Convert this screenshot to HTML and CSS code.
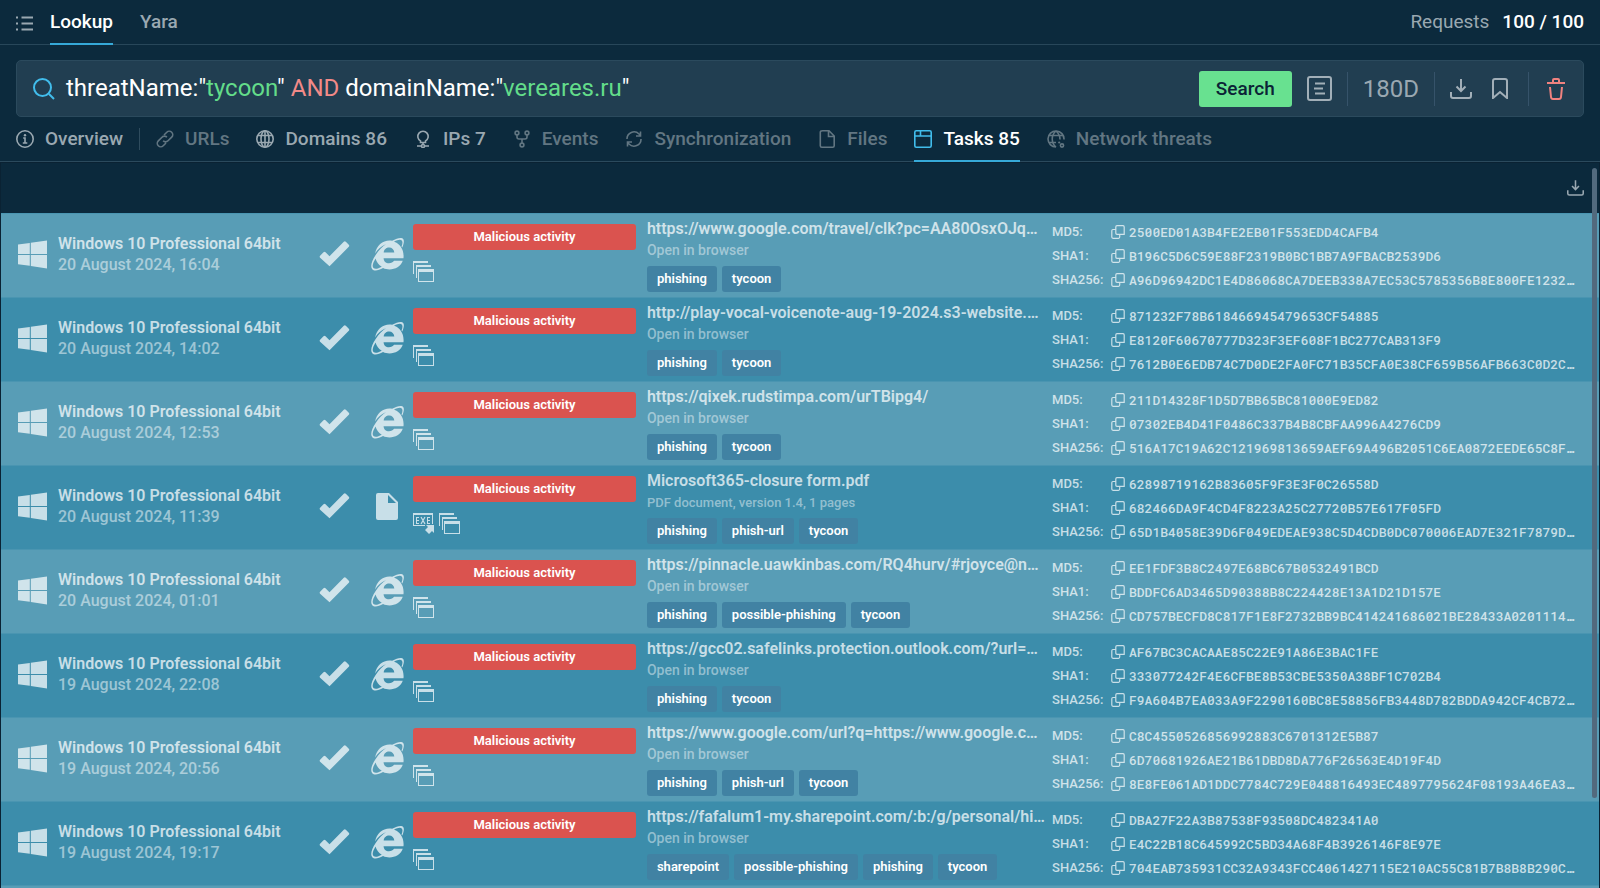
FILE: index.html
```html
<!DOCTYPE html>
<html lang="en">
<head>
<meta charset="utf-8">
<meta name="viewport" content="width=device-width, initial-scale=1">
<title>Threat lookup</title>
<link rel="stylesheet" href="styles.css">
</head>
<body>
<svg class="sprite" aria-hidden="true">
  <symbol id="win" viewBox="0 0 29 29"><path d="M0 4.600 11.800 3v11H0zM12.800 2.800 29 .4V14H12.800zM0 15h11.800v10.800L0 24.200zM12.800 15H29v13.600l-16.200-2.500z"/></symbol>
  <symbol id="check" viewBox="0 0 30 26"><path d="M.6 14.700 4 11.200q1-.8 2 0l4 4L24.300.8q1-.9 2 0l3 3q.9 1 0 2L10 25.300.6 16.700q-.9-1 0-2z"/></symbol>
  <symbol id="ie" viewBox="0 0 32 32"><path fill-rule="evenodd" d="M31.500 20H12.200c.1 3 2.200 4.900 5.200 4.900 2.200 0 4-.8 4.900-2.300h8.500C28.900 28 23.600 31 17.900 31c-2.200 0-4.300-.4-6.200-1.400C7.200 32.200 3 32.800 1.200 30.800-1 28.300.6 22.700 4.500 16.900 7.500 12.500 11.400 8.700 14.600 6.400 9.600 8.600 6 12.300 4 15.500 5.200 8.200 11.200 3 18 3c.9 0 1.600 0 2.500.2C25 .9 29.600-.6 31.200 1.500c1.300 1.700.6 5-.9 8.200l-.7-.9c1-2.600 1.300-5 .2-6-1.200-1.200-4.100-.6-7.500 1.200C28.500 6 32.300 12 31.500 20zM12.300 14.600h10.300c-.2-2.800-2.200-4.800-5-4.800s-5.100 2-5.300 4.800zM4.400 20.300c-2.500 4.200-3.600 7.700-2 9.200 1.400 1.400 4.500.8 8-1.200-2.900-1.800-5.100-4.600-6-8z"/></symbol>
  <symbol id="doc" viewBox="0 0 22 27"><path fill-rule="evenodd" d="M2 0h11l9 9v16q0 2-2 2H2q-2 0-2-2V2q0-2 2-2zm10 2v8h8z"/></symbol>
  <symbol id="stack" viewBox="0 0 21 21"><path d="M0 0h15v2H1v11H0zM3 4h15v2H4v11H3z"/><path fill-rule="evenodd" d="M5 8h16v13H5zm1 3v9h14v-9z"/></symbol>
  <symbol id="exe" viewBox="0 0 21 21"><path fill-rule="evenodd" d="M0 0h20v11h-1V2H1v10h11v1H0z"/><path d="M3 4h3v1H4v2h2v1H4v2h2v1H3zM14 4h3v1h-2v2h2v1h-2v2h2v1h-3zM13 12h8v8l-2-2-3 3-4-4 3-3z"/><path class="thin" d="m8 4 4 7M12 4l-4 7"/></symbol>
  <symbol id="copy" viewBox="0 0 14 14"><path class="line" d="M6 .7h6q1.200 0 1.200 1.200V9.300H6q-1.200 0-1.200-1.200V1.900Q4.800.7 6 .7zM4.800 4.500H2Q.8 4.500.8 5.700v6.400q0 1.200 1.200 1.200h5.500q1.200 0 1.200-1.200V9.300"/></symbol>
  <symbol id="download" viewBox="0 0 22 20"><path class="stroke" d="M1 13v4q0 2 2 2h16q2 0 2-2v-4M11 0v12M6.500 7.500 11 12l4.500-4.500"/></symbol>
</svg>

<header class="topbar">
  <button class="icon-btn menu" aria-label="Menu"><svg viewBox="0 0 17 15" width="17" height="15"><path class="stroke" d="M5.500 1.500H17M5.500 7.500H17M5.500 13.500H17M0 1.500h2M0 7.500h2M0 13.500h2"/></svg></button>
  <nav class="modes">
    <a class="mode active" href="#lookup">Lookup</a>
    <a class="mode" href="#yara">Yara</a>
  </nav>
  <p class="quota"><span>Requests</span><strong>100 / 100</strong></p>
</header>

<form class="search">
  <svg class="glass" viewBox="0 0 22 22" width="22" height="22"><path class="stroke" d="m16 16 5 5"/><circle class="stroke" cx="9.500" cy="9.500" r="8.500"/></svg>
  <div class="query" role="textbox" contenteditable="true" spellcheck="false" aria-label="Query">threatName:"<span class="value">tycoon</span>" <span class="operator">AND</span> domainName:"<span class="value">vereares.ru</span>"</div>
  <button class="submit" type="button">Search</button>
  <button class="icon-btn" type="button" aria-label="Query history"><svg viewBox="0 0 25 25" width="25" height="25"><rect class="stroke" x="1" y="1" width="23" height="23" rx="2"/><path class="stroke" d="M8 7.500h10M7 12.500h9M8 17.500h10"/></svg></button>
  <span class="rule"></span>
  <button class="period" type="button">180D</button>
  <span class="rule"></span>
  <button class="icon-btn" type="button" aria-label="Download"><svg width="22" height="20"><use href="#download"/></svg></button>
  <button class="icon-btn bookmark" type="button" aria-label="Bookmark"><svg viewBox="0 0 16 21" width="16" height="21"><path class="stroke" d="M1 20V3q0-2 2-2h10q2 0 2 2v17l-7-6z"/></svg></button>
  <span class="rule"></span>
  <button class="icon-btn trash" type="button" aria-label="Clear"><svg viewBox="0 0 18 22" width="18" height="22"><path class="stroke" d="M0 5h18M6 5V2q0-1 1-1h4q1 0 1 1v3M3 9l1 10q.2 2 2 2h6q1.800 0 2-2l1-10"/></svg></button>
</form>

<nav class="tabs">
  <a class="tab" href="#overview"><svg viewBox="0 0 18 18"><circle class="fine" cx="9" cy="9" r="8.200"/><path class="fine" d="M7.200 8H9v5M6.800 13h4.500"/><circle cx="9" cy="5.200" r="1.200"/></svg>Overview</a>
  <span class="tab-rule"></span>
  <a class="tab dim" href="#urls"><svg viewBox="0 0 18 18"><path class="fine" d="m8 5 2.800-2.800a3.400 3.400 0 0 1 4.900 4.900L12 10.800a3.400 3.400 0 0 1-4.900 0M10 13l-2.800 2.800a3.400 3.400 0 0 1-4.900-4.900L6 7.200a3.400 3.400 0 0 1 4.900 0"/></svg>URLs</a>
  <a class="tab" href="#domains"><svg viewBox="0 0 18 18"><circle class="fine" cx="9" cy="9" r="8.200"/><ellipse class="fine" cx="9" cy="9" rx="4" ry="8.200"/><path class="fine" d="M2 5.500h14M2 12.500h14M9 1v16"/></svg>Domains 86</a>
  <a class="tab" href="#ips"><svg viewBox="0 0 18 18"><path class="fine" d="M6.500 12.500V11a5.200 5.200 0 1 1 5 0v1.500zM9 12.500v2M3 16h4M11 16h4"/><circle class="fine" cx="9" cy="16" r="1.500"/></svg>IPs 7</a>
  <a class="tab dim" href="#events"><svg viewBox="0 0 18 18"><circle class="fine" cx="4" cy="3" r="1.900"/><circle class="fine" cx="14" cy="3" r="1.900"/><circle class="fine" cx="9" cy="15" r="1.900"/><path class="fine" d="M4 5v2q0 2 2 2h6q2 0 2-2V5M9 9v4"/></svg>Events</a>
  <a class="tab dim" href="#sync"><svg viewBox="0 0 18 18"><path class="fine" d="M2 9a7 7 0 0 1 12-5l1.500 1.500M15.500 1.500v4.500H11M16 9a7 7 0 0 1-12 5l-1.500-1.500M2.500 16.500V12H7"/></svg>Synchronization</a>
  <a class="tab dim" href="#files"><svg viewBox="0 0 18 18"><path class="fine" d="M4.500.8H11l5.200 5.200v9.700q0 1.500-1.500 1.500H3.800q-1.500 0-1.500-1.500V2.300Q2.300.8 4.500.8zM10.500 1v5.500H16"/></svg>Files</a>
  <a class="tab active" href="#tasks"><svg viewBox="0 0 18 18"><rect class="fine" x=".8" y=".8" width="16.400" height="16.400" rx="1.500"/><path class="fine" d="M1 6h16M6.500 1v5"/></svg>Tasks 85</a>
  <a class="tab dim" href="#network"><svg viewBox="0 0 18 18"><path class="fine" d="M9 17A8 8 0 1 1 17 9.500M9 1C4 5 4 13 9 17M9 1c3 2.500 4 5.500 4 8.500M2 5.500h14M2 12.500h7"/><circle class="fine" cx="15" cy="15.500" r="1.600"/><circle cx="12.200" cy="12.500" r="1.100"/></svg>Network threats</a>
</nav>

<main class="results">
  <div class="toolbar">
    <button class="icon-btn" aria-label="Export tasks"><svg width="17" height="16"><use href="#download"/></svg></button>
  </div>
  <table class="tasks">
    <colgroup><col class="c-os"><col class="c-status"><col class="c-type"><col class="c-verdict"><col class="c-name"><col></colgroup>
    <tbody>
    <tr>
      <td><div class="os"><svg class="win"><use href="#win"/></svg><p><b>Windows 10 Professional 64bit</b><time>20 August 2024, 16:04</time></p></div></td>
      <td><svg class="check"><use href="#check"/></svg></td>
      <td><svg class="ie"><use href="#ie"/></svg></td>
      <td class="top"><span class="verdict">Malicious activity</span><div class="marks"><svg><use href="#stack"/></svg></div></td>
      <td class="top"><a class="name" href="#t1">https://www.google.com/travel/clk?pc=AA80OsxOJq…</a><p class="kind">Open in browser</p><div class="tags"><span>phishing</span><span>tycoon</span></div></td>
      <td class="top"><dl>
        <dt>MD5:</dt><dd><button aria-label="Copy MD5"><svg><use href="#copy"/></svg></button>2500ED01A3B4FE2EB01F553EDD4CAFB4</dd>
        <dt>SHA1:</dt><dd><button aria-label="Copy SHA1"><svg><use href="#copy"/></svg></button>B196C5D6C59E88F2319B0BC1BB7A9FBACB2539D6</dd>
        <dt>SHA256:</dt><dd><button aria-label="Copy SHA256"><svg><use href="#copy"/></svg></button>A96D96942DC1E4D86068CA7DEEB338A7EC53C5785356B8E800FE1232…</dd>
      </dl></td>
    </tr>
    <tr>
      <td><div class="os"><svg class="win"><use href="#win"/></svg><p><b>Windows 10 Professional 64bit</b><time>20 August 2024, 14:02</time></p></div></td>
      <td><svg class="check"><use href="#check"/></svg></td>
      <td><svg class="ie"><use href="#ie"/></svg></td>
      <td class="top"><span class="verdict">Malicious activity</span><div class="marks"><svg><use href="#stack"/></svg></div></td>
      <td class="top"><a class="name" href="#t2">http://play-vocal-voicenote-aug-19-2024.s3-website.…</a><p class="kind">Open in browser</p><div class="tags"><span>phishing</span><span>tycoon</span></div></td>
      <td class="top"><dl>
        <dt>MD5:</dt><dd><button aria-label="Copy MD5"><svg><use href="#copy"/></svg></button>871232F78B618466945479653CF54885</dd>
        <dt>SHA1:</dt><dd><button aria-label="Copy SHA1"><svg><use href="#copy"/></svg></button>E8120F60670777D323F3EF608F1BC277CAB313F9</dd>
        <dt>SHA256:</dt><dd><button aria-label="Copy SHA256"><svg><use href="#copy"/></svg></button>7612B0E6EDB74C7D0DE2FA0FC71B35CFA0E38CF659B56AFB663C0D2C…</dd>
      </dl></td>
    </tr>
    <tr>
      <td><div class="os"><svg class="win"><use href="#win"/></svg><p><b>Windows 10 Professional 64bit</b><time>20 August 2024, 12:53</time></p></div></td>
      <td><svg class="check"><use href="#check"/></svg></td>
      <td><svg class="ie"><use href="#ie"/></svg></td>
      <td class="top"><span class="verdict">Malicious activity</span><div class="marks"><svg><use href="#stack"/></svg></div></td>
      <td class="top"><a class="name" href="#t3">https://qixek.rudstimpa.com/urTBipg4/</a><p class="kind">Open in browser</p><div class="tags"><span>phishing</span><span>tycoon</span></div></td>
      <td class="top"><dl>
        <dt>MD5:</dt><dd><button aria-label="Copy MD5"><svg><use href="#copy"/></svg></button>211D14328F1D5D7BB65BC81000E9ED82</dd>
        <dt>SHA1:</dt><dd><button aria-label="Copy SHA1"><svg><use href="#copy"/></svg></button>07302EB4D41F0486C337B4B8CBFAA996A4276CD9</dd>
        <dt>SHA256:</dt><dd><button aria-label="Copy SHA256"><svg><use href="#copy"/></svg></button>516A17C19A62C121969813659AEF69A496B2051C6EA0872EEDE65C8F…</dd>
      </dl></td>
    </tr>
    <tr>
      <td><div class="os"><svg class="win"><use href="#win"/></svg><p><b>Windows 10 Professional 64bit</b><time>20 August 2024, 11:39</time></p></div></td>
      <td><svg class="check"><use href="#check"/></svg></td>
      <td><svg class="doc"><use href="#doc"/></svg></td>
      <td class="top"><span class="verdict">Malicious activity</span><div class="marks"><svg><use href="#exe"/></svg><svg><use href="#stack"/></svg></div></td>
      <td class="top"><a class="name" href="#t4">Microsoft365-closure form.pdf</a><p class="kind file">PDF document, version 1.4, 1 pages</p><div class="tags"><span>phishing</span><span>phish-url</span><span>tycoon</span></div></td>
      <td class="top"><dl>
        <dt>MD5:</dt><dd><button aria-label="Copy MD5"><svg><use href="#copy"/></svg></button>62898719162B83605F9F3E3F0C26558D</dd>
        <dt>SHA1:</dt><dd><button aria-label="Copy SHA1"><svg><use href="#copy"/></svg></button>682466DA9F4CD4F8223A25C27720B57E617F05FD</dd>
        <dt>SHA256:</dt><dd><button aria-label="Copy SHA256"><svg><use href="#copy"/></svg></button>65D1B4058E39D6F049EDEAE938C5D4CDB0DC070006EAD7E321F7879D…</dd>
      </dl></td>
    </tr>
    <tr>
      <td><div class="os"><svg class="win"><use href="#win"/></svg><p><b>Windows 10 Professional 64bit</b><time>20 August 2024, 01:01</time></p></div></td>
      <td><svg class="check"><use href="#check"/></svg></td>
      <td><svg class="ie"><use href="#ie"/></svg></td>
      <td class="top"><span class="verdict">Malicious activity</span><div class="marks"><svg><use href="#stack"/></svg></div></td>
      <td class="top"><a class="name" href="#t5">https://pinnacle.uawkinbas.com/RQ4hurv/#rjoyce@n…</a><p class="kind">Open in browser</p><div class="tags"><span>phishing</span><span>possible-phishing</span><span>tycoon</span></div></td>
      <td class="top"><dl>
        <dt>MD5:</dt><dd><button aria-label="Copy MD5"><svg><use href="#copy"/></svg></button>EE1FDF3B8C2497E68BC67B0532491BCD</dd>
        <dt>SHA1:</dt><dd><button aria-label="Copy SHA1"><svg><use href="#copy"/></svg></button>BDDFC6AD3465D90388B8C224428E13A1D21D157E</dd>
        <dt>SHA256:</dt><dd><button aria-label="Copy SHA256"><svg><use href="#copy"/></svg></button>CD757BECFD8C817F1E8F2732BB9BC414241686021BE28433A0201114…</dd>
      </dl></td>
    </tr>
    <tr>
      <td><div class="os"><svg class="win"><use href="#win"/></svg><p><b>Windows 10 Professional 64bit</b><time>19 August 2024, 22:08</time></p></div></td>
      <td><svg class="check"><use href="#check"/></svg></td>
      <td><svg class="ie"><use href="#ie"/></svg></td>
      <td class="top"><span class="verdict">Malicious activity</span><div class="marks"><svg><use href="#stack"/></svg></div></td>
      <td class="top"><a class="name" href="#t6">https://gcc02.safelinks.protection.outlook.com/?url=…</a><p class="kind">Open in browser</p><div class="tags"><span>phishing</span><span>tycoon</span></div></td>
      <td class="top"><dl>
        <dt>MD5:</dt><dd><button aria-label="Copy MD5"><svg><use href="#copy"/></svg></button>AF67BC3CACAAE85C22E91A86E3BAC1FE</dd>
        <dt>SHA1:</dt><dd><button aria-label="Copy SHA1"><svg><use href="#copy"/></svg></button>333077242F4E6CFBE8B53CBE5350A38BF1C702B4</dd>
        <dt>SHA256:</dt><dd><button aria-label="Copy SHA256"><svg><use href="#copy"/></svg></button>F9A604B7EA033A9F2290160BC8E58856FB3448D782BDDA942CF4CB72…</dd>
      </dl></td>
    </tr>
    <tr>
      <td><div class="os"><svg class="win"><use href="#win"/></svg><p><b>Windows 10 Professional 64bit</b><time>19 August 2024, 20:56</time></p></div></td>
      <td><svg class="check"><use href="#check"/></svg></td>
      <td><svg class="ie"><use href="#ie"/></svg></td>
      <td class="top"><span class="verdict">Malicious activity</span><div class="marks"><svg><use href="#stack"/></svg></div></td>
      <td class="top"><a class="name" href="#t7">https://www.google.com/url?q=https://www.google.c…</a><p class="kind">Open in browser</p><div class="tags"><span>phishing</span><span>phish-url</span><span>tycoon</span></div></td>
      <td class="top"><dl>
        <dt>MD5:</dt><dd><button aria-label="Copy MD5"><svg><use href="#copy"/></svg></button>C8C4550526856992883C6701312E5B87</dd>
        <dt>SHA1:</dt><dd><button aria-label="Copy SHA1"><svg><use href="#copy"/></svg></button>6D70681926AE21B61DBD8DA776F26563E4D19F4D</dd>
        <dt>SHA256:</dt><dd><button aria-label="Copy SHA256"><svg><use href="#copy"/></svg></button>8E8FE061AD1DDC7784C729E048816493EC4897795624F08193A46EA3…</dd>
      </dl></td>
    </tr>
    <tr>
      <td><div class="os"><svg class="win"><use href="#win"/></svg><p><b>Windows 10 Professional 64bit</b><time>19 August 2024, 19:17</time></p></div></td>
      <td><svg class="check"><use href="#check"/></svg></td>
      <td><svg class="ie"><use href="#ie"/></svg></td>
      <td class="top"><span class="verdict">Malicious activity</span><div class="marks"><svg><use href="#stack"/></svg></div></td>
      <td class="top"><a class="name" href="#t8">https://fafalum1-my.sharepoint.com/:b:/g/personal/hi…</a><p class="kind">Open in browser</p><div class="tags"><span>sharepoint</span><span>possible-phishing</span><span>phishing</span><span>tycoon</span></div></td>
      <td class="top"><dl>
        <dt>MD5:</dt><dd><button aria-label="Copy MD5"><svg><use href="#copy"/></svg></button>DBA27F22A3B87538F93508DC482341A0</dd>
        <dt>SHA1:</dt><dd><button aria-label="Copy SHA1"><svg><use href="#copy"/></svg></button>E4C22B18C645992C5BD34A68F4B3926146F8E97E</dd>
        <dt>SHA256:</dt><dd><button aria-label="Copy SHA256"><svg><use href="#copy"/></svg></button>704EAB735931CC32A9343FCC4061427115E210AC55C81B7B8B8B290C…</dd>
      </dl></td>
    </tr>
    <tr><td colspan="6"></td></tr>
    </tbody>
  </table>
  <div class="scrollbar"></div>
</main>
</body>
</html>
```
FILE: styles.css
```css
* { box-sizing: border-box; }

body {
  margin: 0;
  height: 100vh;
  overflow: hidden;
  display: flex;
  flex-direction: column;
  background: #0c2a3d;
  color: #9aa8b1;
  font-family: Roboto, "Liberation Sans", sans-serif;
  font-size: 19px;
}

p, dl, dd { margin: 0; }
a { color: inherit; text-decoration: none; }
button { margin: 0; padding: 0; border: 0; background: none; color: inherit; font: inherit; cursor: pointer; }
svg { display: block; fill: currentColor; flex: none; }
.sprite { position: absolute; width: 0; height: 0; }
.stroke { fill: none; stroke: currentColor; stroke-width: 2; }
.fine { fill: none; stroke: currentColor; stroke-width: 1.6; }
.line { fill: none; stroke: currentColor; stroke-width: 1.2; }
.thin { fill: none; stroke: currentColor; stroke-width: 1.2; }

.topbar {
  flex: none;
  display: flex;
  height: 45px;
  padding: 0 16px;
  line-height: 43px;
  border-bottom: 1px solid #28475a;
}
.menu { display: flex; align-items: center; margin-right: 17px; padding-top: 2px; }
.modes { display: flex; gap: 27px; }
.mode { height: 45px; font-weight: 500; }
.mode.active { color: #fff; border-bottom: 2px solid #36a9d8; }
.quota { display: flex; gap: 13px; margin-left: auto; }
.quota strong { color: #fff; font-weight: 500; }

.search {
  flex: none;
  display: flex;
  align-items: center;
  height: 57px;
  margin: 15px 16px 0;
  padding: 0 18px 0 16px;
  background: #213e51;
  border: 1px solid #2b4a5d;
  border-radius: 5px;
}
.search .icon-btn { color: #a2afb8; }
.glass { color: #41bdec; }
.query { flex: 1; min-width: 0; margin-left: 11px; padding-bottom: 2px; color: #fff; font-size: 24px; line-height: 34px; white-space: nowrap; outline: 0; }
.value { color: #63dc8a; }
.operator { color: #f28a88; }
.submit { width: 93px; height: 36px; margin-right: 15px; border-radius: 3px; background: #68e190; color: #0b2336; font-weight: 500; }
.rule { width: 1px; height: 34px; margin: 0 15px; background: #36536a; }
.period { font-size: 24px; }
.bookmark { margin-left: 20px; margin-right: 5px; }
.search .trash { margin-left: 3px; color: #f0827f; }

.tabs {
  flex: none;
  display: flex;
  align-items: stretch;
  gap: 27px;
  height: 45px;
  padding: 0 16px;
  border-bottom: 1px solid #2b4a5d;
}
.tab { display: flex; align-items: center; gap: 11px; height: 45px; font-weight: 500; white-space: nowrap; border-bottom: 2px solid transparent; }
.tab svg { width: 18px; height: 18px; }
.tab.dim { color: #627682; }
.tab.active { color: #fff; border-color: #36a9d8; }
.tab.active svg { color: #41bdec; }
.tab-rule { width: 1px; height: 22px; margin: 11px -11px 0; background: #2f4c5e; }

.results { position: relative; flex: 1; min-height: 0; overflow: hidden; border: 1px solid #0a2233; border-width: 1px 1px 0; background: #0b293c; }
.toolbar { display: flex; justify-content: flex-end; align-items: center; height: 50px; padding: 0 15px; }

.tasks { width: 100%; table-layout: fixed; border-collapse: collapse; }
.c-os { width: 318px; }
.c-status { width: 52px; }
.c-type { width: 42px; }
.c-verdict { width: 14.64%; }
.c-name { width: 25.35%; }
.tasks tr { height: 84px; background: #3c8dab; color: rgba(255, 255, 255, .72); }
.tasks tr:nth-child(odd) { background: #589db6; }
.tasks td { padding: 0 0 3px; vertical-align: middle; border-top: 1px solid #4a95b1; }
.tasks td.top { vertical-align: top; padding: 0 11px 0 0; }

.os { display: flex; align-items: center; gap: 11px; padding-left: 17px; }
.os b, .os time { display: block; font-size: 16px; line-height: 21px; white-space: nowrap; }
.os b, .name { font-weight: 600; }
.os time { color: rgba(255, 255, 255, .5); font-weight: 500; }
.win { width: 29px; height: 29px; }
.check { width: 31px; height: 26px; }
.ie { width: 33px; height: 34px; }
.doc { width: 22px; height: 27px; margin-left: 5px; }

.verdict { display: block; margin-top: 10px; border-radius: 3px; background: #da534f; color: #fff; font-size: 13px; font-weight: 600; line-height: 26px; text-align: center; }
.marks { display: flex; gap: 5px; margin-top: 11px; }
.marks svg { width: 21px; height: 21px; }

.name { display: block; overflow: hidden; margin: 4px -11px 0 0; font-size: 16px; line-height: 22px; white-space: nowrap; }
.kind { color: rgba(255, 255, 255, .45); font-size: 14px; font-weight: 500; line-height: 21px; }
.kind.file { font-size: 13px; }
.tags { display: flex; gap: 5px; margin-top: 5px; }
.tags span { padding: 0 10px; border-radius: 3px; background: #4182a3; color: #fff; font-size: 13px; font-weight: 600; line-height: 26px; white-space: nowrap; }

dl { display: grid; grid-template-columns: 59px 1fr; margin-top: 6px; font-size: 13px; line-height: 24px; }
dt { font-weight: 500; }
dd { display: flex; align-items: center; gap: 4px; white-space: nowrap; font-family: "Roboto Mono", "Liberation Mono", monospace; font-weight: 500; }
dd svg { width: 14px; height: 14px; }

.scrollbar { position: absolute; top: 5px; right: 2px; width: 5px; height: 630px; border-radius: 3px; background: #526a7e; }
```
